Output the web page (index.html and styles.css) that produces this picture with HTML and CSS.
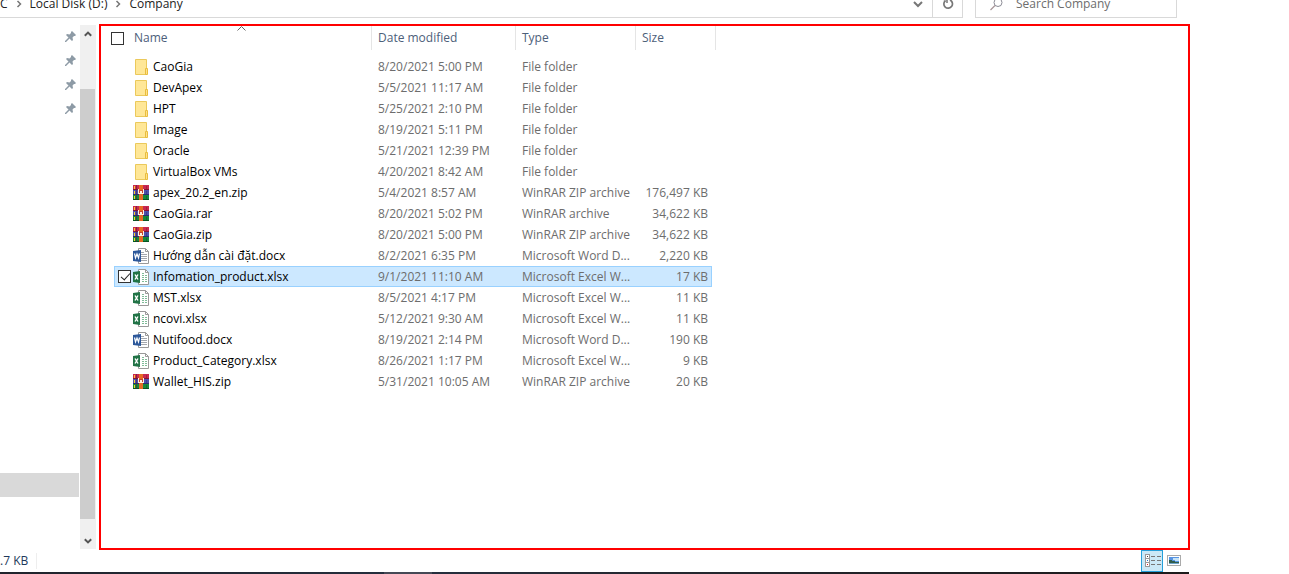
FILE: index.html
```html
<!DOCTYPE html>
<html lang="en">
<head>
<meta charset="utf-8">
<title>Company</title>
<link rel="stylesheet" href="styles.css">
</head>
<body>
<svg class="sprites" aria-hidden="true">
  <symbol id="folder" viewBox="0 0 16 16"><path d="M2.5.5h11v15h-11z" fill="#ffe797" stroke="#ebc95b"/><path d="M12.500 9.500h2v6h-2z" fill="#ffe18a" stroke="#e9bd3e"/></symbol>
  <symbol id="rar" viewBox="0 0 16 16" shape-rendering="crispEdges">
    <path d="M0 0h16v5H0z" fill="#c92850"/><path d="M0 4h16v1H0z" fill="#861334"/>
    <path d="M0 5h16v5H0z" fill="#4d50ad"/><path d="M0 9h16v1H0z" fill="#292d72"/>
    <path d="M0 10h16v5H0z" fill="#16883b"/><path d="M0 14h16v1H0z" fill="#075622"/>
    <path d="M1 1h1v3H1zM1 6h1v3H1zM1 11h1v3H1z" fill="#ffd329"/><path d="M3 0h1v15H3z" fill="#56203a" opacity=".6"/>
    <path d="M6 0h4v15H6z" fill="#e66b24"/><path d="M5 5h6v4H5z" fill="#c8412d"/><path d="M5 4h1v5H5zM10 4h1v5h-1zM7 6h2v2H7zM6 8h4v1H6z" fill="#fff2df"/><path d="M13 1h1v3h-1zM13 6h1v3h-1zM13 11h1v3h-1z" fill="#000" opacity=".2"/>
  </symbol>
  <symbol id="word" viewBox="0 0 16 16">
    <path d="M5.500.5h7l3 3v12h-10z" fill="#fff" stroke="#999"/><path d="M12.500.5v3h3" fill="none" stroke="#999"/>
    <path d="M8 4.500h3M8 6.500h6M8 8.500h6M8 10.500h6M8 12.500h6" stroke="#a3a7ad"/>
    <path d="M0 3l8-1v12l-8-1z" fill="#2b579a"/><path d="M1.500 5.500l1 4.500 1.500-4 1.500 4 1-4.500" fill="none" stroke="#fff" stroke-width="1.200"/>
  </symbol>
  <symbol id="excel" viewBox="0 0 16 16">
    <path d="M5.500.5h7l3 3v12h-10z" fill="#fff" stroke="#999"/><path d="M12.500.5v3h3" fill="none" stroke="#999"/>
    <path d="M9 4.500h2M9 6.500h2m1 0h2M9 8.500h2m1 0h2M9 10.500h2m1 0h2M9 12.500h2m1 0h2" stroke="#7fbb98"/>
    <path d="M0 3l7-1v12l-7-1z" fill="#217346"/><path d="M2 5.500l3 5m0-5l-3 5" stroke="#fff" stroke-width="1.400"/>
  </symbol>
  <symbol id="pin" viewBox="0 0 12 12"><path d="M7 0l4 4-1 1H9L7.500 6.500 8 9 7 10 4.500 7.500 1 11H0v-1l3.500-3.500L1 4l1-1 2.500.5L6 2V1z" fill="#8e9ba6"/></symbol>
  <symbol id="crumb" viewBox="0 0 6 8"><path d="M1.500 1l3 3-3 3" fill="none" stroke="#777" stroke-width="1.500"/></symbol>
  <symbol id="up" viewBox="0 0 8 6"><path d="M.8 4.800L4 1.600l3.200 3.200" fill="none" stroke="#555" stroke-width="2"/></symbol>
  <symbol id="down" viewBox="0 0 8 6"><path d="M.8 1.200L4 4.400l3.200-3.200" fill="none" stroke="#555" stroke-width="2"/></symbol>
</svg>

<header class="toolbar">
  <nav class="address" aria-label="Path">
    <a class="crumb" href="#">C</a>
    <svg class="crumb-arrow"><use href="#crumb"/></svg>
    <a class="crumb" href="#">Local Disk (D:)</a>
    <svg class="crumb-arrow"><use href="#crumb"/></svg>
    <a class="crumb" href="#">Company</a>
    <button class="history" aria-label="Previous locations"><svg width="10" height="8" viewBox="0 0 10 8"><path d="M1 2l4 4 4-4" fill="none" stroke="#777" stroke-width="2"/></svg></button>
    <button class="refresh" aria-label="Refresh"><svg width="12" height="12" viewBox="0 0 12 12"><path d="M8 2a4.300 4.300 0 1 1-4.500.5" fill="none" stroke="#777" stroke-width="1.700"/><path d="M1.500 1.500H5V5" fill="none" stroke="#777" stroke-width="1.500"/></svg></button>
  </nav>
  <label class="search">
    <svg width="13" height="13" viewBox="0 0 13 13"><circle cx="8" cy="4.500" r="4" fill="none" stroke="#8c8c96"/><path d="M5 7.500L.5 12" stroke="#a8969a" stroke-width="1.300"/></svg>
    <input class="search-input" type="text" placeholder="Search Company" aria-label="Search Company">
  </label>
</header>

<div class="workspace">
  <aside class="sidebar">
    <div class="tree">
      <div class="pins">
        <svg class="pin"><use href="#pin"/></svg>
        <svg class="pin"><use href="#pin"/></svg>
        <svg class="pin"><use href="#pin"/></svg>
        <svg class="pin"><use href="#pin"/></svg>
      </div>
      <div class="tree-selected"></div>
    </div>
    <div class="scrollbar">
      <button class="scroll-button" aria-label="Scroll up"><svg class="scroll-arrow"><use href="#up"/></svg></button>
      <div class="scroll-track"><div class="scroll-thumb"></div></div>
      <button class="scroll-button" aria-label="Scroll down"><svg class="scroll-arrow"><use href="#down"/></svg></button>
    </div>
  </aside>

  <main class="files">
    <table class="list">
      <thead>
        <tr class="head">
          <th class="head-name"><input class="tick" type="checkbox" aria-label="Select all"><span>Name</span><svg class="sort" viewBox="0 0 9 5"><path d="M.5 4.500l4-4 4 4" fill="none" stroke="#666"/></svg></th>
          <th class="head-cell">Date modified</th><th class="head-cell">Type</th><th class="head-cell">Size</th>
        </tr>
      </thead>
      <tbody class="rows">
        <tr class="row"><td></td><td class="name"><svg class="icon"><use href="#folder"/></svg>CaoGia</td><td class="meta">8/20/2021 5:00 PM</td><td class="meta">File folder</td><td class="size"></td></tr>
        <tr class="row"><td></td><td class="name"><svg class="icon"><use href="#folder"/></svg>DevApex</td><td class="meta">5/5/2021 11:17 AM</td><td class="meta">File folder</td><td class="size"></td></tr>
        <tr class="row"><td></td><td class="name"><svg class="icon"><use href="#folder"/></svg>HPT</td><td class="meta">5/25/2021 2:10 PM</td><td class="meta">File folder</td><td class="size"></td></tr>
        <tr class="row"><td></td><td class="name"><svg class="icon"><use href="#folder"/></svg>Image</td><td class="meta">8/19/2021 5:11 PM</td><td class="meta">File folder</td><td class="size"></td></tr>
        <tr class="row"><td></td><td class="name"><svg class="icon"><use href="#folder"/></svg>Oracle</td><td class="meta">5/21/2021 12:39 PM</td><td class="meta">File folder</td><td class="size"></td></tr>
        <tr class="row"><td></td><td class="name"><svg class="icon"><use href="#folder"/></svg>VirtualBox VMs</td><td class="meta">4/20/2021 8:42 AM</td><td class="meta">File folder</td><td class="size"></td></tr>
        <tr class="row"><td></td><td class="name"><svg class="icon"><use href="#rar"/></svg>apex_20.2_en.zip</td><td class="meta">5/4/2021 8:57 AM</td><td class="meta">WinRAR ZIP archive</td><td class="size">176,497 KB</td></tr>
        <tr class="row"><td></td><td class="name"><svg class="icon"><use href="#rar"/></svg>CaoGia.rar</td><td class="meta">8/20/2021 5:02 PM</td><td class="meta">WinRAR archive</td><td class="size">34,622 KB</td></tr>
        <tr class="row"><td></td><td class="name"><svg class="icon"><use href="#rar"/></svg>CaoGia.zip</td><td class="meta">8/20/2021 5:00 PM</td><td class="meta">WinRAR ZIP archive</td><td class="size">34,622 KB</td></tr>
        <tr class="row"><td></td><td class="name"><svg class="icon"><use href="#word"/></svg>Hướng dẫn cài đặt.docx</td><td class="meta">8/2/2021 6:35 PM</td><td class="meta">Microsoft Word D...</td><td class="size">2,220 KB</td></tr>
        <tr class="row selected"><td class="check"><input class="tick" type="checkbox" checked aria-label="Select Infomation_product.xlsx"></td><td class="name"><svg class="icon"><use href="#excel"/></svg>Infomation_product.xlsx</td><td class="meta">9/1/2021 11:10 AM</td><td class="meta">Microsoft Excel W...</td><td class="size">17 KB</td></tr>
        <tr class="row"><td></td><td class="name"><svg class="icon"><use href="#excel"/></svg>MST.xlsx</td><td class="meta">8/5/2021 4:17 PM</td><td class="meta">Microsoft Excel W...</td><td class="size">11 KB</td></tr>
        <tr class="row"><td></td><td class="name"><svg class="icon"><use href="#excel"/></svg>ncovi.xlsx</td><td class="meta">5/12/2021 9:30 AM</td><td class="meta">Microsoft Excel W...</td><td class="size">11 KB</td></tr>
        <tr class="row"><td></td><td class="name"><svg class="icon"><use href="#word"/></svg>Nutifood.docx</td><td class="meta">8/19/2021 2:14 PM</td><td class="meta">Microsoft Word D...</td><td class="size">190 KB</td></tr>
        <tr class="row"><td></td><td class="name"><svg class="icon"><use href="#excel"/></svg>Product_Category.xlsx</td><td class="meta">8/26/2021 1:17 PM</td><td class="meta">Microsoft Excel W...</td><td class="size">9 KB</td></tr>
        <tr class="row"><td></td><td class="name"><svg class="icon"><use href="#rar"/></svg>Wallet_HIS.zip</td><td class="meta">5/31/2021 10:05 AM</td><td class="meta">WinRAR ZIP archive</td><td class="size">20 KB</td></tr>
      </tbody>
    </table>
  </main>
</div>

<footer class="status">
  <span class="status-text">.7 KB</span>
  <div class="views">
    <button class="view active" aria-label="Details view"><svg width="16" height="14" viewBox="0 0 16 14" shape-rendering="crispEdges"><path d="M0 0h5v13H0z" fill="#999"/><path d="M1 1h3v3H1zM1 5h3v3H1zM1 9h3v3H1z" fill="#fff"/><path d="M2 2h1v1H2z" fill="#444"/><path d="M2 6h1v1H2z" fill="#2878c8"/><path d="M2 10h1v1H2z" fill="#d22"/><path d="M6 2h4v1H6zM12 2h4v1h-4zM6 6h4v1H6zM12 6h4v1h-4zM6 10h4v1H6zM12 10h4v1h-4z" fill="#777"/></svg></button>
    <button class="view" aria-label="Thumbnail view"><svg width="14" height="11" viewBox="0 0 14 11" shape-rendering="crispEdges"><path d="M0 0h14v11H0z" fill="#aaa"/><path d="M1 1h12v9H1z" fill="#fff"/><path d="M2 2h10v7H2z" fill="#5794e2"/><path d="M6 3h6v3H8V5H6z" fill="#c5e3f7"/><path d="M2 5h3v1h3v1h4v1H2z" fill="#315e4c"/><path d="M2 8h10v1H2z" fill="#6fa4c8"/></svg></button>
  </div>
</footer>
<div class="taskbar"><div class="taskbar-item"></div></div>
</body>
</html>
```
FILE: styles.css
```css
* { box-sizing: border-box; }
body {
  margin: 0;
  padding-right: 99px;
  height: 100vh;
  display: flex;
  flex-direction: column;
  overflow: hidden;
  background: #fff;
  color: #000;
  font: 12px/16px "Open Sans", "Noto Sans", sans-serif;
}
button { padding: 0; border: 0; background: none; font: inherit; display: flex; align-items: center; justify-content: center; }
.sprites { display: none; }

.toolbar { display: flex; gap: 12px; flex: none; height: 30px; margin: -12px 13px 6px 0; }
.address { flex: 1; display: flex; align-items: center; padding-top: 2px; border: 1px solid #d9d9d9; border-left: 0; }
.crumb { color: #222; text-decoration: none; }
.crumb-arrow { width: 6px; height: 8px; margin: 0 8px; }
.history { margin-left: auto; width: 28px; height: 28px; }
.refresh { width: 30px; height: 28px; border-left: 1px solid #d9d9d9; }
.search { display: flex; align-items: center; gap: 13px; width: 202px; padding: 2px 0 0 14px; border: 1px solid #d9d9d9; }
.search-input { flex: 1; min-width: 0; padding: 0; border: 0; outline: 0; background: none; font: inherit; }
.search-input::placeholder { color: #6d6d6d; opacity: 1; }

.workspace { flex: 1; min-height: 0; display: flex; gap: 3px; }
.sidebar { display: flex; width: 96px; padding: 1px 0; }
.tree { flex: 1; display: flex; flex-direction: column; justify-content: space-between; padding: 6px 1px 52px 0; }
.pins { display: flex; flex-direction: column; align-items: flex-end; gap: 12px; padding-right: 2px; }
.pin { width: 12px; height: 12px; }
.tree-selected { height: 24px; background: #d9d9d9; }
.scrollbar { display: flex; flex-direction: column; width: 16px; background: #f0f0f0; }
.scroll-button { height: 17px; padding-right: 1px; }
.scroll-arrow { width: 8px; height: 6px; }
.scroll-track { flex: 1; padding: 47px 1px 13px 0; }
.scroll-thumb { height: 100%; background: #cdcdcd; }

.files { flex: 1; border: 2px solid #f00; overflow: hidden; }
.list, .rows { display: block; }
.list thead { display: block; }
.head { display: grid; grid-template-columns: 261px 144px 120px 80px; height: 24px; margin-left: 10px; }
.head th { border-right: 1px solid #e5e5e5; color: #4c607a; font-weight: 400; text-align: left; line-height: 24px; padding: 0 6px; }
.head .head-name { position: relative; display: flex; align-items: center; gap: 10px; padding: 0; }
.sort { position: absolute; top: 0; left: 126px; width: 9px; height: 5px; }
.rows { padding: 6px 0 0 13px; }
.row { display: grid; grid-template-columns: 18px 240px 144px 120px 76px; align-items: center; width: 598px; height: 21px; }
.row td { padding: 0; }
.row .name { display: flex; align-items: center; gap: 4px; padding-left: 1px; }
.row .meta { padding-left: 6px; color: #6d6d6d; white-space: nowrap; }
.row .size { padding-right: 4px; color: #6d6d6d; text-align: right; }
.row .check { display: flex; padding-left: 4px; }
.icon { width: 16px; height: 16px; flex: none; }
.selected { background: #cce8ff; outline: 1px solid #99d1ff; outline-offset: -1px; }
.tick { appearance: none; position: relative; flex: none; width: 13px; height: 13px; margin: 0; border: 1px solid #333; background: #fff; }
.tick:checked::after { content: ""; position: absolute; left: 4px; top: 0; width: 4px; height: 8px; border: solid #222; border-width: 0 1px 1px 0; transform: rotate(42deg); }

.status { flex: none; display: flex; justify-content: space-between; height: 22px; }
.status-text { margin: 3px 0; padding-right: 8px; border-right: 1px solid #eee; color: #1e395b; }
.views { display: flex; padding-right: 5px; }
.view { width: 22px; padding-bottom: 2px; }
.view.active { padding: 0 0 0 1px; border: 1px solid #26a0da; background: #cbe8f6; }
.taskbar { flex: none; height: 2px; margin-right: 1px; background: linear-gradient(90deg, #20242c, #252f3e 35%, #252a33 50%, #1d1b1b); }
.taskbar-item { width: 48px; height: 2px; margin-left: 384px; background: #454955; }
```
